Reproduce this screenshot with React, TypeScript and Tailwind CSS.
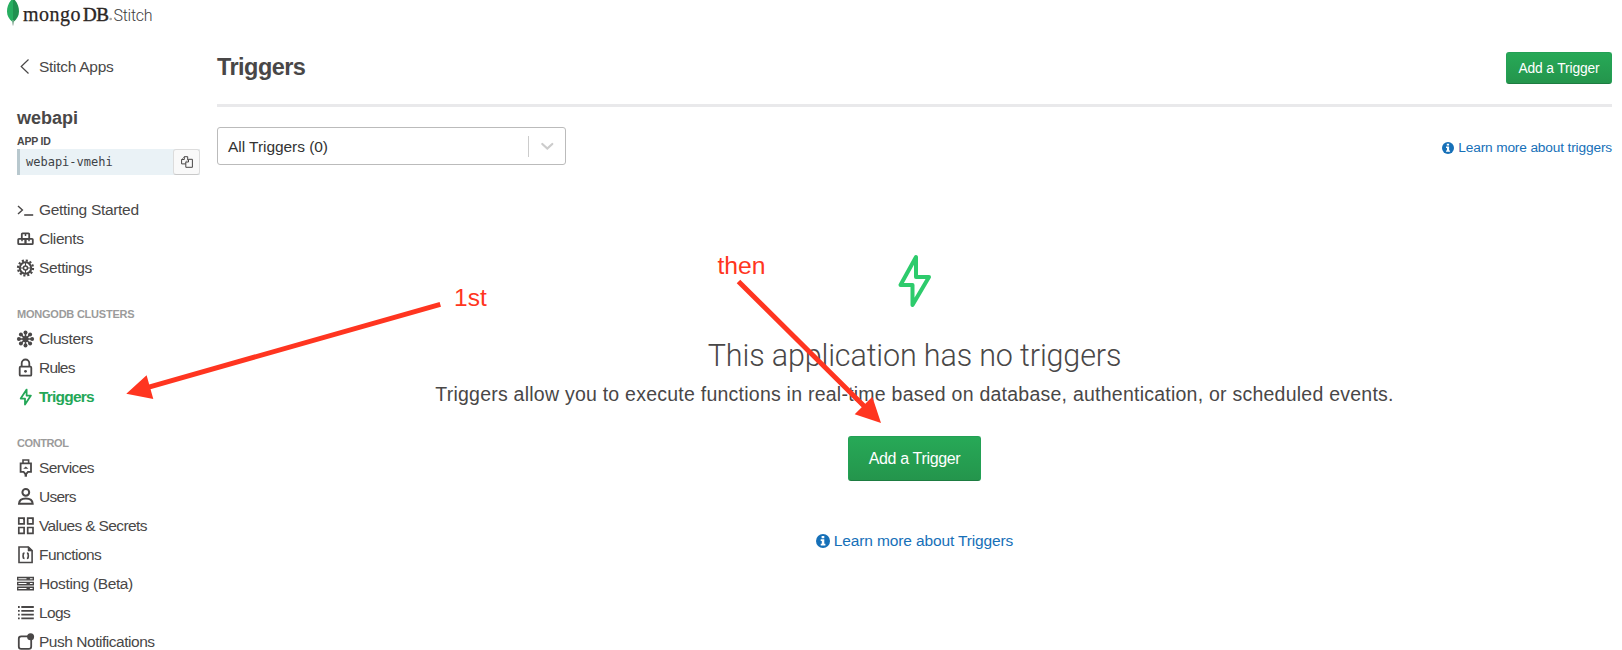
import type { ReactNode } from "react";

const Icon = ({ children }: { children: ReactNode }) => (
  <svg
    width="17"
    height="18"
    viewBox="0 0 17 18"
    fill="none"
    stroke="currentColor"
    strokeWidth="1.8"
    className="shrink-0 overflow-visible"
  >
    {children}
  </svg>
);

const icons = {
  prompt: (
    <Icon>
      <path d="M1 5l4.400 4L1 13" strokeWidth="1.400" />
      <path d="M7.200 14h9" strokeWidth="1.600" />
    </Icon>
  ),
  clients: (
    <Icon>
      <rect x="4.800" y="3.300" width="7.400" height="5.500" rx="0.800" />
      <rect x="1.200" y="8.800" width="7.300" height="5.400" rx="0.800" />
      <rect x="8.500" y="8.800" width="7.300" height="5.400" rx="0.800" />
      <path d="M8.500 3.700v2.300M5 9v2.200M12 9v2.200" strokeWidth="1.500" />
    </Icon>
  ),
  gear: (
    <Icon>
      <circle cx="8.500" cy="9" r="7.500" strokeWidth="2.200" strokeDasharray="2.100 1.827" />
      <circle cx="8.500" cy="9" r="5.700" strokeWidth="2" />
      <circle cx="8.500" cy="9" r="2" strokeWidth="1.500" />
      <path d="M8.500 4v3M8.500 11v3M3.500 9h3M10.500 9h3" strokeWidth="1" />
    </Icon>
  ),
  clusters: (
    <Icon>
      <path d="M8.500 2.800v12.400M2.300 9h12.400M4.200 4.700l8.600 8.600M12.800 4.700l-8.600 8.600" strokeWidth="1.600" />
      <g fill="currentColor" stroke="none">
        <circle cx="8.500" cy="9" r="3.100" />
        <circle cx="8.500" cy="2.400" r="2" />
        <circle cx="8.500" cy="15.600" r="2" />
        <circle cx="1.900" cy="9" r="2" />
        <circle cx="15.100" cy="9" r="2" />
        <circle cx="3.900" cy="4.400" r="2" />
        <circle cx="13.100" cy="4.400" r="2" />
        <circle cx="3.900" cy="13.600" r="2" />
        <circle cx="13.100" cy="13.600" r="2" />
      </g>
    </Icon>
  ),
  lock: (
    <Icon>
      <rect x="2.700" y="7.700" width="11.600" height="9" rx="1" />
      <path d="M4.700 7.700V4.300a3.800 3.800 0 0 1 7.600 0v3.400" />
      <circle cx="8.500" cy="12.300" r="1.400" fill="currentColor" stroke="none" />
    </Icon>
  ),
  bolt: (
    <Icon>
      <path d="M9.600 1.600v6h4.300L8 16.600v-6H3.700z" strokeLinejoin="round" />
    </Icon>
  ),
  services: (
    <Icon>
      <path d="M3.600 4.300h10.400v8.600H11L8.800 15.400 6.600 12.900H3.600z" />
      <path d="M6 4.300V1h5.600v3.300" strokeWidth="1.600" />
      <path d="M8.800 14v3.700" strokeWidth="2.400" />
      <path d="M6.200 9.800l2.600-2.400 2.600 2.400z" fill="currentColor" stroke="none" />
    </Icon>
  ),
  user: (
    <Icon>
      <circle cx="8.800" cy="4.300" r="3.400" strokeWidth="2" />
      <path d="M2 15.700c.2-3.600 2.700-5.200 6.800-5.200s6.700 1.600 6.900 5.200z" strokeWidth="2" />
    </Icon>
  ),
  grid: (
    <Icon>
      <path d="M1.800 1.100h5.300v5.800H1.800zM10.700 1.100H16v5.800h-5.300zM1.800 10.500h5.300v5.800H1.800zM10.700 10.500H16v5.800h-5.300z" strokeWidth="1.700" />
      <path d="M5.300 1.300h1.700v1.800zM14.200 1.300h1.700v1.800z" fill="currentColor" strokeWidth="0.600" />
    </Icon>
  ),
  fn: (
    <Icon>
      <path d="M2 1h9.400l3.700 3.600v11.900H2z" strokeWidth="1.600" />
      <path d="M11 .7v4.400h4.200z" fill="currentColor" strokeWidth="0.500" />
      <path
        d="M7.500 7.200c-1.500 0-1.200.6-1.200 1.500 0 .7-.3 1.100-1 1.100.7 0 1 .4 1 1.100 0 .9-.3 1.500 1.200 1.500M9.900 7.200c1.500 0 1.200.6 1.200 1.500 0 .7.300 1.100 1 1.100-.7 0-1 .4-1 1.100 0 .9.300 1.500-1.200 1.500"
        strokeWidth="1.700"
      />
    </Icon>
  ),
  hosting: (
    <Icon>
      <path d="M.700 2.500h15.600v2.400H.700zM.700 7.400h15.600v2.400H.700zM.700 12.300h15.600v2.400H.700z" strokeWidth="1.400" />
      <path d="M9.500 3.700h3.400M9.500 8.600h3.400M9.500 13.500h3.400" strokeWidth="2" />
    </Icon>
  ),
  logs: (
    <Icon>
      <path d="M4.300 3h12.500M4.300 6.800h12.500M4.300 10.600h12.500M4.300 14.400h12.500" strokeWidth="1.800" />
      <path d="M1 3h1.700M1 6.800h1.700M1 10.600h1.700M1 14.400h1.700" strokeWidth="1.800" />
    </Icon>
  ),
  push: (
    <Icon>
      <rect x="1.800" y="3.300" width="12.400" height="12.600" rx="2.400" strokeWidth="1.800" />
      <circle cx="13.600" cy="3.800" r="3.500" fill="currentColor" stroke="none" />
    </Icon>
  ),
};

const InfoIcon = ({ size }: { size: number }) => (
  <svg width={size} height={size} viewBox="0 0 14 14" className="shrink-0">
    <circle cx="7" cy="7" r="7" fill="#1670b8" />
    <path d="M5.600 2.100h2.700v2.100H5.600zM4.700 5.300h3.600v4.500h1.100v1.700H4.700V9.800h1.100V7H4.700z" fill="#fff" />
  </svg>
);

type Item = { icon: ReactNode; label: string; spacing: string; active?: boolean };

const general: Item[] = [
  { icon: icons.prompt, label: "Getting Started", spacing: "tracking-[-0.3px]" },
  { icon: icons.clients, label: "Clients", spacing: "tracking-[-0.4px]" },
  { icon: icons.gear, label: "Settings", spacing: "tracking-[-0.38px]" },
];
const clusters: Item[] = [
  { icon: icons.clusters, label: "Clusters", spacing: "tracking-[-0.38px]" },
  { icon: icons.lock, label: "Rules", spacing: "tracking-[-0.8px]" },
  { icon: icons.bolt, label: "Triggers", spacing: "tracking-[-0.800px]", active: true },
];
const control: Item[] = [
  { icon: icons.services, label: "Services", spacing: "tracking-[-0.55px]" },
  { icon: icons.user, label: "Users", spacing: "tracking-[-0.75px]" },
  { icon: icons.grid, label: "Values & Secrets", spacing: "tracking-[-0.62px]" },
  { icon: icons.fn, label: "Functions", spacing: "tracking-[-0.55px]" },
  { icon: icons.hosting, label: "Hosting (Beta)", spacing: "tracking-[-0.37px]" },
  { icon: icons.logs, label: "Logs", spacing: "tracking-[-0.6px]" },
  { icon: icons.push, label: "Push Notifications", spacing: "tracking-[-0.47px]" },
];

const NavList = ({ items }: { items: Item[] }) => (
  <ul>
    {items.map((item) => (
      <li
        key={item.label}
        className={`flex h-[29px] items-center gap-[5px] text-[15.5px] whitespace-nowrap ${item.spacing} ${
          item.active ? "font-bold text-[#23a757]" : "text-[#494747]"
        }`}
      >
        {item.icon}
        <span className="pt-px">{item.label}</span>
      </li>
    ))}
  </ul>
);

const NavHeading = ({ children, spacing }: { children: string; spacing: string }) => (
  <h3 className={`flex h-[42px] items-end pb-[2px] text-[11px] leading-[16px] font-bold text-[#9b9b9b] ${spacing}`}>
    {children}
  </h3>
);

const Logo = () => (
  <header className="flex h-[30px] items-start pl-[6px]">
    <svg width="14" height="26" viewBox="0 0 14 26">
      <path d="M7 -2C2.500 2.500 1 7 1 11.500c0 4.500 2.200 7.600 5.300 10.200L7 25z" fill="#27ae60" />
      <path d="M7 -2c4.600 4.500 6 9 6 13.500 0 4.500-2.200 7.600-5.300 10.200L7 25z" fill="#219150" />
      <path d="M7 20v5.500" stroke="#a9b0ac" strokeWidth="1" />
    </svg>
    <div className="flex items-baseline pl-[3px] leading-[29px] text-[#2b2624]">
      <span className="font-['Liberation_Serif',serif] text-[20px] tracking-[0.5px] [-webkit-text-stroke:0.25px_#2b2624]">
        mongo
      </span>
      <span className="ml-[2px] font-['Liberation_Serif',serif] text-[19px] tracking-[-0.5px] [-webkit-text-stroke:0.45px_#2b2624]">
        DB
      </span>
      <svg width="4" height="4" viewBox="0 0 4 4" className="ml-px">
        <circle cx="1.700" cy="2" r="1.300" fill="#aaa" />
      </svg>
      <span className="font-[Roboto,sans-serif] text-[16px] font-light tracking-[-0.25px] text-[#3d3d3d]">Stitch</span>
    </div>
  </header>
);

const Sidebar = () => (
  <aside className="flex w-[217px] shrink-0 flex-col pl-[17px] text-[#494747]">
    <a className="mt-[22px] flex h-[30px] items-center text-[15.500px] tracking-[-0.28px]">
      <svg width="17" height="18" viewBox="0 0 17 18" fill="none" stroke="#494747" strokeWidth="1.200">
        <path d="M11.500 1.500L4.200 8.500l7.300 7" />
      </svg>
      <span className="ml-[5px]">Stitch Apps</span>
    </a>
    <h2 className="mt-[24px] h-[25px] text-[18px] leading-[24px] font-bold">webapi</h2>
    <div className="mt-[3px] h-[15px] text-[10.500px] leading-[15px] font-bold tracking-[-0.2px]">APP ID</div>
    <div className="flex h-[26px] w-[183px] border-l-[3px] border-[#b8c8ce] bg-[#eaf2f6]">
      <code className="flex-1 pl-[6px] font-['DejaVu_Sans_Mono',monospace] text-[12px] leading-[26px] text-[#3d4247]">
        webapi-vmehi
      </code>
      <button className="flex w-[27px] items-center justify-center rounded-[3px] border border-[#dcdcdc] border-b-[#c9c9c9] bg-[#f9f9f9]">
        <svg width="12" height="12" viewBox="0 0 12 12" fill="#f9f9f9" stroke="#494747" strokeWidth="1">
          <path d="M3.300.7h3.400v7.200H.6V3.500z" />
          <path d="M3.300.7v2.800H.6" />
          <path d="M7.500 3.300h3.900v8H4.800V6z" />
          <path d="M7.500 3.300V6H4.800" />
        </svg>
      </button>
    </div>
    <nav className="mt-[20px]">
      <NavList items={general} />
      <NavHeading spacing="tracking-[-0.23px]">MONGODB CLUSTERS</NavHeading>
      <NavList items={clusters} />
      <NavHeading spacing="tracking-[-0.4px]">CONTROL</NavHeading>
      <NavList items={control} />
    </nav>
  </aside>
);

const Annotations = () => (
  <svg
    className="pointer-events-none absolute top-0 left-0"
    width="1622"
    height="650"
    viewBox="0 0 1622 650"
    fill="#ff3520"
  >
    <path d="M440.300 304.300L148 387.400M738.500 281.500L865 407" stroke="#ff3520" strokeWidth="5" />
    <path d="M126.300 393.800l20.300-18.600 6.700 23.800zM881 423l-26.300-8.700 17.600-17.600z" />
    <text x="454" y="306" className="font-['Liberation_Sans',sans-serif] text-[24.500px]">
      1st
    </text>
    <text x="717.500" y="274" className="font-['Liberation_Sans',sans-serif] text-[24.700px]">
      then
    </text>
  </svg>
);

export default function App() {
  return (
    <div className="relative h-[650px] w-[1622px] overflow-hidden bg-white font-['Liberation_Sans',Arial,sans-serif]">
      <Logo />
      <div className="flex">
        <Sidebar />
        <main className="mr-[10px] flex-1">
          <div className="flex h-[77px] items-start justify-between border-b-[3px] border-[#e9e9eb] pt-[22px]">
            <h1 className="text-[23.500px] leading-[31px] font-bold tracking-[-0.55px] text-[#494747]">Triggers</h1>
            <button className="h-[32px] w-[106px] rounded-[3px] border border-[#23a055] border-b-[#1d7c41] bg-linear-to-b from-[#27a957] to-[#24954c] pt-[2px] text-[13.800px] tracking-[-0.15px] text-white">
              Add a Trigger
            </button>
          </div>
          <div className="mt-[20px] flex items-center justify-between">
            <div className="flex h-[38px] w-[349px] items-center rounded-[3px] border border-[#bbb] pl-[10px] text-[15.500px] tracking-[-0.05px] text-[#333]">
              <span className="flex-1 pt-px">All Triggers (0)</span>
              <span className="h-[21px] w-px bg-[#ccc]" />
              <svg width="36" height="20" viewBox="0 0 36 20" fill="none" stroke="#ccc" strokeWidth="2.200" strokeLinecap="round">
                <path d="M13.300 8l5 4.600 5-4.600" />
              </svg>
            </div>
            <a className="flex items-center gap-[4px] pt-[3px] text-[13.700px] tracking-[-0.15px] text-[#1670b8]">
              <InfoIcon size={12} />
              <span className="leading-[20px] whitespace-nowrap">Learn more about triggers</span>
            </a>
          </div>
          <section className="flex flex-col items-center pt-[87px] text-[#494747]">
            <svg width="36" height="58" viewBox="0 0 36 58" fill="none" stroke="#2dcb6c" strokeWidth="4" strokeLinejoin="round">
              <path d="M19 5v20h13L15.500 53V33H3.500z" />
            </svg>
            <h2 className="mt-[26px] font-[Roboto,sans-serif] text-[30.500px] leading-[40px] font-light tracking-[-0.15px]">
              This application has no triggers
            </h2>
            <p className="mt-[5px] text-[19.500px] leading-[26px] tracking-[0.24px] whitespace-nowrap">
              Triggers allow you to execute functions in real-time based on database, authentication, or scheduled events.
            </p>
            <button className="mt-[29px] h-[45px] w-[133px] rounded-[3px] border border-[#23a055] border-b-[#1d7c41] bg-linear-to-b from-[#27a957] to-[#24954c] text-[16px] tracking-[-0.34px] text-white">
              Add a Trigger
            </button>
            <a className="mt-[48px] flex h-[24px] items-center gap-[4px] text-[15.500px] tracking-[-0.13px] text-[#1670b8]">
              <InfoIcon size={14} />
              <span>Learn more about Triggers</span>
            </a>
          </section>
        </main>
      </div>
      <Annotations />
    </div>
  );
}
